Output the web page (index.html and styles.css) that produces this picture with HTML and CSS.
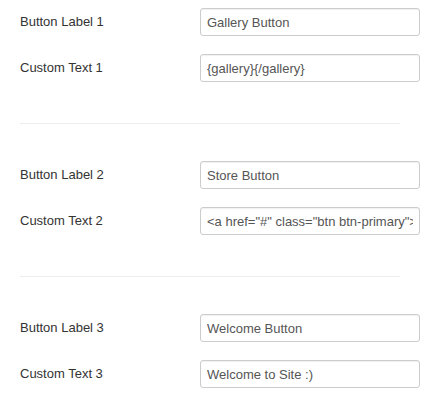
FILE: index.html
```html
<!DOCTYPE html>
<html>
<head>
<meta charset="utf-8">
<link rel="stylesheet" href="styles.css">
</head>
<body>
<div class="panel">
  <div class="group">
    <div class="row"><label class="label">Button Label 1</label><input class="field" type="text" value="Gallery Button"></div>
    <div class="row"><label class="label">Custom Text 1</label><input class="field" type="text" value="{gallery}{/gallery}"></div>
  </div>
  <div class="divider"></div>
  <div class="group">
    <div class="row"><label class="label">Button Label 2</label><input class="field" type="text" value="Store Button"></div>
    <div class="row"><label class="label">Custom Text 2</label><input class="field" type="text" value="&lt;a href=&quot;#&quot; class=&quot;btn btn-primary&quot;&gt;Visit Store&lt;/a&gt;"></div>
  </div>
  <div class="divider"></div>
  <div class="group">
    <div class="row"><label class="label">Button Label 3</label><input class="field" type="text" value="Welcome Button"></div>
    <div class="row"><label class="label">Custom Text 3</label><input class="field" type="text" value="Welcome to Site :)"></div>
  </div>
</div>
</body>
</html>
```
FILE: styles.css
```css
html, body {
  margin: 0;
  padding: 0;
  background: #fff;
}
body {
  font-family: "Liberation Sans", Arial, sans-serif;
  font-size: 13px;
  color: #333;
}
.panel {
  padding: 8px 0 0 20px;
}
.group {
  display: flex;
  flex-direction: column;
  gap: 18px;
}
.row {
  display: grid;
  grid-template-columns: 180px 220px;
  align-items: center;
  height: 28px;
}
.label {
  font-size: 13px;
  color: #333;
  line-height: 18px;
}
.field {
  box-sizing: border-box;
  width: 220px;
  height: 28px;
  margin: 0;
  padding: 0 6px;
  border: 1px solid #ccc;
  border-radius: 3px;
  box-shadow: inset 0 1px 1px rgba(0,0,0,0.06);
  font-family: "Liberation Sans", Arial, sans-serif;
  font-size: 13px;
  color: #555;
  background: #fff;
  outline: none;
}
.divider {
  width: 380px;
  height: 1px;
  background: #eee;
  margin: 41px 0 37px;
}
```
